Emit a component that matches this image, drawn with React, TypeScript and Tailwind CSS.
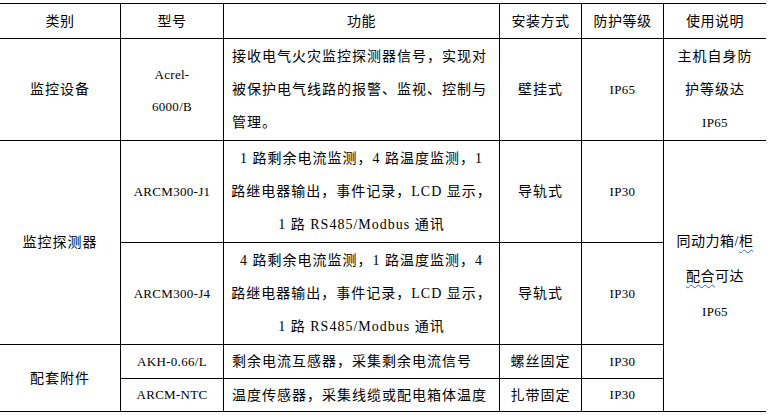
const cjk = "font-['Liberation_Serif','Noto_Sans_CJK_SC',serif]";
const code = "font-['Liberation_Serif','Noto_Sans_CJK_SC',serif] text-[13px] tracking-[0.3px]";

function Cell({ className = '', children }: { className?: string; children?: React.ReactNode }) {
  return (
    <div className={`bg-white flex items-center justify-center text-center text-black ${className}`}>
      {children}
    </div>
  );
}

const headers = ['类别', '型号', '功能', '安装方式', '防护等级', '使用说明'];

export default function App() {
  return (
    <div className="w-[772px] h-[415px] bg-white pt-[3px]">
      <div
        className={`w-[766px] grid grid-cols-[120px_102px_275px_81px_81px_102px] grid-rows-[34px_101px_101px_101px_33px_32px] gap-px bg-black border-y border-black text-[14px] ${cjk}`}
      >
        {headers.map((h) => (
          <Cell key={h} className="tracking-[0.5px]">{h}</Cell>
        ))}

        {/* 监控设备 */}
        <Cell className="tracking-[1px]">监控设备</Cell>
        <Cell className={`${code} leading-[32px] pt-[3px]`}>
          <div>
            Acrel-
            <br />
            6000/B
          </div>
        </Cell>
        <Cell className="justify-start text-left px-[8px] leading-[33px] tracking-[1px]">
          <div>
            接收电气火灾监控探测器信号，实现对
            <br />
            被保护电气线路的报警、监视、控制与
            <br />
            管理。
          </div>
        </Cell>
        <Cell className="tracking-[1px]">壁挂式</Cell>
        <Cell className={code}>IP65</Cell>
        <Cell className="leading-[33px] tracking-[1px]">
          <div>
            主机自身防
            <br />
            护等级达
            <br />
            <span className={code}>IP65</span>
          </div>
        </Cell>

        {/* 监控探测器 */}
        <Cell className="row-span-2 tracking-[1px]">监控探测器</Cell>
        <Cell className={code}>ARCM300-J1</Cell>
        <Cell className="leading-[33px] tracking-[1px]">
          <div>
            1 路剩余电流监测，4 路温度监测，1
            <br />
            路继电器输出，事件记录，LCD 显示，
            <br />
            1 路 RS485/Modbus 通讯
          </div>
        </Cell>
        <Cell className="tracking-[1px]">导轨式</Cell>
        <Cell className={code}>IP30</Cell>
        <Cell className="row-span-4 leading-[35px] tracking-[0.5px]">
          <div>
            同动力箱/
            <span className="underline decoration-wavy decoration-[#3b5fd0] decoration-1 underline-offset-[3px]">柜</span>
            <br />
            <span className="underline decoration-wavy decoration-[#3b5fd0] decoration-1 underline-offset-[3px]">配合</span>
            可达
            <br />
            <span className={code}>IP65</span>
          </div>
        </Cell>

        <Cell className={code}>ARCM300-J4</Cell>
        <Cell className="leading-[33px] tracking-[1px]">
          <div>
            4 路剩余电流监测，1 路温度监测，4
            <br />
            路继电器输出，事件记录，LCD 显示，
            <br />
            1 路 RS485/Modbus 通讯
          </div>
        </Cell>
        <Cell className="tracking-[1px]">导轨式</Cell>
        <Cell className={code}>IP30</Cell>

        {/* 配套附件 */}
        <Cell className="row-span-2 tracking-[1px]">配套附件</Cell>
        <Cell className={code}>AKH-0.66/L</Cell>
        <Cell className="justify-start text-left px-[8px] tracking-[1px]">剩余电流互感器，采集剩余电流信号</Cell>
        <Cell className="tracking-[1px]">螺丝固定</Cell>
        <Cell className={code}>IP30</Cell>

        <Cell className={code}>ARCM-NTC</Cell>
        <Cell className="justify-start text-left px-[8px] tracking-[1px]">温度传感器，采集线缆或配电箱体温度</Cell>
        <Cell className="tracking-[1px]">扎带固定</Cell>
        <Cell className={code}>IP30</Cell>
      </div>
    </div>
  );
}
